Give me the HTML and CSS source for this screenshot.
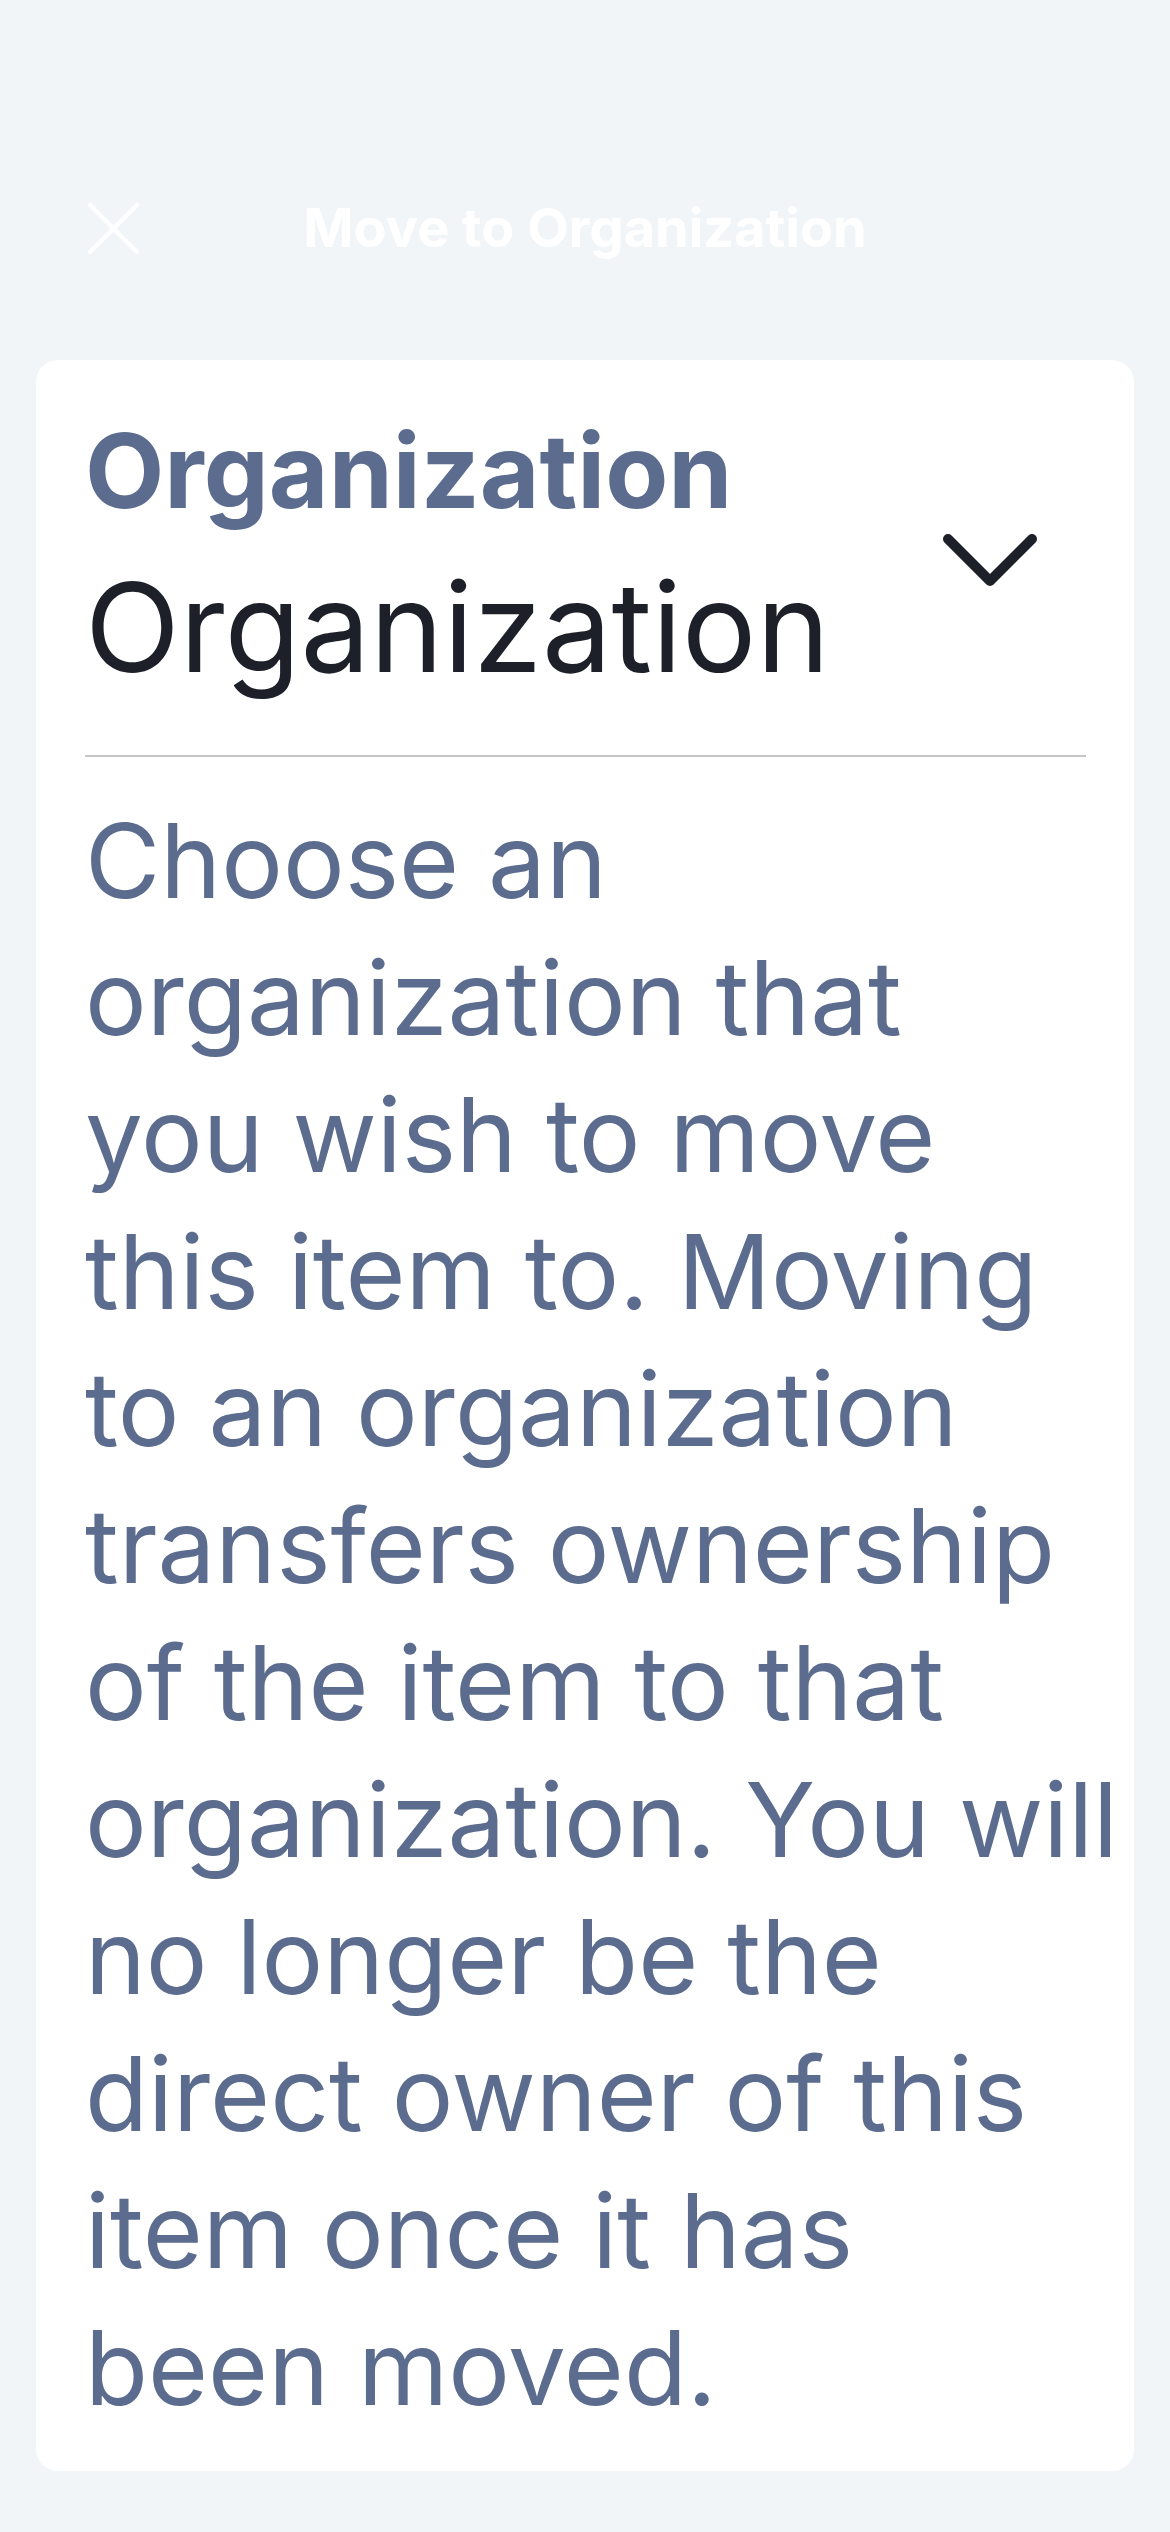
FILE: index.html
```html
<!DOCTYPE html>
<html lang="en">
<head>
<meta charset="utf-8">
<title>Move to Organization</title>
<link rel="stylesheet" href="styles.css">
</head>
<body>
<div class="screen">
  <header class="nav">
    <div class="nav-left">
      <svg class="close-icon" width="57" height="57" viewBox="0 0 57 57" aria-label="Close">
        <path d="M5 5 L52 52 M52 5 L5 52" fill="none" stroke="#ffffff" stroke-width="4.5" stroke-linecap="round"/>
      </svg>
    </div>
    <h1 class="nav-title">Move to Organization</h1>
    <div class="nav-right"></div>
  </header>

  <section class="card">
    <div class="field">
      <div class="field-text">
        <div class="field-label">Organization</div>
        <div class="field-value">Organization</div>
      </div>
      <svg class="chevron" width="100" height="60" viewBox="0 0 100 60" aria-hidden="true">
        <path d="M8 9 L50 51 L92 9" fill="none" stroke="#1d2029" stroke-width="10" stroke-linecap="round" stroke-linejoin="round"/>
      </svg>
    </div>
    <div class="divider"></div>
    <p class="help">Choose an<br>organization that<br>you wish to move<br>this item to. Moving<br>to an organization<br>transfers ownership<br>of the item to that<br>organization. You will<br>no longer be the<br>direct owner of this<br>item once it has<br>been moved.</p>
  </section>
</div>
</body>
</html>
```

FILE: styles.css
```css
html, body {
  margin: 0;
  padding: 0;
}

body {
  background: #f2f5f8;
  font-family: "Inter", "Noto Sans", "DejaVu Sans", sans-serif;
  width: 1170px;
  min-height: 2532px;
}

.screen {
  padding-top: 178px;
}

.nav {
  height: 100px;
  display: grid;
  grid-template-columns: 1fr auto 1fr;
  align-items: center;
}

.nav-left {
  padding-left: 85px;
  display: flex;
  align-items: center;
}

.close-icon {
  display: block;
}

.nav-title {
  margin: 0;
  font-size: 54px;
  font-weight: 700;
  color: #ffffff;
  line-height: 1;
  white-space: nowrap;
}

.card {
  margin: 82px 36px 0;
  background: #ffffff;
  border-radius: 22px;
  padding: 49px 48px 35px 49px;
}

.field {
  display: flex;
  align-items: center;
  justify-content: space-between;
  padding-bottom: 54px;
}

.field-label {
  font-size: 103px;
  font-weight: 700;
  line-height: 1.2;
  color: #5b6c8f;
}

.field-value {
  margin-top: 20px;
  font-size: 124px;
  font-weight: 400;
  line-height: 1.2;
  color: #1d2029;
}

.chevron {
  display: block;
  margin-top: 9px;
  margin-right: 46px;
}

.divider {
  height: 2px;
  background: #c6c6c8;
}

.help {
  margin: 35px -40px 0 0;
  font-size: 103px;
  font-weight: 400;
  line-height: 137px;
  color: #5b6c8f;
}
```
